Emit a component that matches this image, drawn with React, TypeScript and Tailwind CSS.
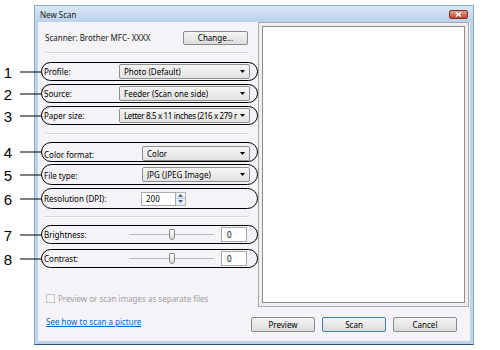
import React from "react";

function Arrow() {
  return (
    <svg width="5" height="3" viewBox="0 0 5 3" className="shrink-0">
      <path d="M0 0H5L2.5 3Z" fill="#000" />
    </svg>
  );
}

function Dropdown({ text, w, tight }: { text: string; w: string; tight?: boolean }) {
  return (
    <div
      className={`${w} h-[15px] shrink-0 flex items-center justify-between border border-[#8e8f8f] rounded-[2px] bg-linear-to-b from-[#f6f6f6] to-[#e2e2e2] pl-[4px] pr-[4px] gap-[3px]`}
    >
      <span
        className={`whitespace-nowrap overflow-hidden leading-[13px] text-black ${
          tight ? "tracking-[-0.35px]" : ""
        }`}
      >
        {text}
      </span>
      <Arrow />
    </div>
  );
}

function Marker({ n }: { n: string }) {
  return (
    <div className="absolute right-full top-1/2 -translate-y-1/2 flex items-center">
      <span className="w-[12px] text-center font-['Liberation_Sans'] text-[15px] leading-none text-black">
        {n}
      </span>
      <div className="ml-[6px] w-[22px] h-px bg-black" />
    </div>
  );
}

function Oval({
  n,
  cls,
  children,
}: {
  n: string;
  cls: string;
  children: React.ReactNode;
}) {
  return (
    <div
      className={`relative ml-[3px] w-[217px] shrink-0 rounded-full border-[1.5px] border-black flex items-center pl-[2px] pr-[7px] ${cls}`}
    >
      <Marker n={n} />
      {children}
    </div>
  );
}

function Separator({ cls }: { cls: string }) {
  return (
    <div className={`ml-[7px] w-[203px] shrink-0 ${cls}`}>
      <div className="h-px bg-[#d5d5d5]" />
      <div className="h-px bg-white" />
    </div>
  );
}

function Slider() {
  return (
    <div className="relative w-[85px] h-[12px] flex items-center">
      <div className="w-full h-px bg-[#b9b9b9]" />
      <div className="absolute left-[40px] top-0 w-[6px] h-[11px] border border-[#8a8a8a] rounded-b-[3px] rounded-t-[1px] bg-linear-to-b from-[#fafafa] to-[#dcdcdc]" />
    </div>
  );
}

function ValueBox() {
  return (
    <div className="ml-[7px] w-[26px] h-[15px] border border-[#a9a9a9] bg-white flex items-center pl-[5px] text-black">
      0
    </div>
  );
}

function Button({ label, def }: { label: string; def?: boolean }) {
  return (
    <div
      className={`h-[15px] w-[64px] flex items-center justify-center rounded-[2px] border bg-linear-to-b from-[#f5f5f5] to-[#dcdcdc] text-black ${
        def ? "border-[#3c7fb1]" : "border-[#8a8a8a]"
      }`}
    >
      {label}
    </div>
  );
}

export default function App() {
  return (
    <div className="w-[500px] h-[350px] bg-white overflow-hidden font-['Noto_Sans'] text-[8px] leading-none">
      <div className="ml-[34px] mt-[5px] w-[440px] h-[340px] flex flex-col border border-[#8ea8c6] border-b-[#2f527c] bg-[#bcd3ec]">
        {/* title bar */}
        <div className="h-[16px] shrink-0 flex items-center justify-between pl-[5px] pr-[5px] pt-[1px] bg-linear-to-b from-[#d9e7f6] to-[#bad2eb]">
          <span className="text-[#1a1a1a] text-[8px]">New Scan</span>
          <div className="w-[19px] h-[9px] rounded-[2px] border border-[#7c3428] bg-linear-to-b from-[#e6a08f] to-[#c0432d] flex items-center justify-center">
            <svg width="7" height="5" viewBox="0 0 7 5">
              <path d="M1 0.5L6 4.5M6 0.5L1 4.5" stroke="#fff" strokeWidth="1.4" />
            </svg>
          </div>
        </div>
        {/* content */}
        <div className="flex-1 mx-[3px] mb-[3px] bg-[#f5f3f7] flex">
          {/* left panel */}
          <div className="w-[220px] shrink-0 flex flex-col">
            <div className="mt-[9px] ml-[7px] w-[203px] h-[14px] flex items-center justify-between">
              <span className="text-[#1a1a1a]">Scanner: Brother MFC- XXXX</span>
              <div className="w-[65px] h-[14px] flex items-center justify-center rounded-[2px] border border-[#8a8a8a] bg-linear-to-b from-[#f5f5f5] to-[#dcdcdc] text-black">
                Change...
              </div>
            </div>
            <Separator cls="mt-[7px]" />
            <Oval n="1" cls="mt-[8px] h-[19px]">
              <span className="flex-1">Profile:</span>
              <Dropdown text="Photo (Default)" w="w-[131px]" />
            </Oval>
            <Oval n="2" cls="mt-[3px] h-[19px]">
              <span className="flex-1">Source:</span>
              <Dropdown text="Feeder (Scan one side)" w="w-[131px]" />
            </Oval>
            <Oval n="3" cls="mt-[3px] h-[19px]">
              <span className="flex-1">Paper size:</span>
              <Dropdown text="Letter 8.5 x 11 inches (216 x 279 mm)" w="w-[131px]" tight />
            </Oval>
            <Separator cls="mt-[8px]" />
            <Oval n="4" cls="mt-[7px] h-[20px]">
              <span className="flex-1 pt-[6px]">Color format:</span>
              <div className="pt-[3px]">
                <Dropdown text="Color" w="w-[108px]" />
              </div>
            </Oval>
            <Oval n="5" cls="mt-[2px] h-[21px]">
              <span className="flex-1 pt-[2px]">File type:</span>
              <Dropdown text="JPG (JPEG Image)" w="w-[108px]" />
            </Oval>
            <Oval n="6" cls="mt-[3px] h-[21px]">
              <span className="w-[97px]">Resolution (DPI):</span>
              <div className="w-[35px] h-[14px] border border-[#a9a9a9] bg-white flex items-center pl-[4px] text-black">
                200
              </div>
              <div className="w-[10px] h-[14px] flex flex-col border border-[#b5b5b5] border-l-0">
                <div className="flex-1 flex items-center justify-center bg-linear-to-b from-[#f2f7fc] to-[#dfe9f4] border-b border-[#c9c9c9]">
                  <svg width="5" height="3" viewBox="0 0 5 3">
                    <path d="M0 3H5L2.5 0Z" fill="#4d6185" />
                  </svg>
                </div>
                <div className="flex-1 flex items-center justify-center bg-linear-to-b from-[#f2f7fc] to-[#dfe9f4]">
                  <svg width="5" height="3" viewBox="0 0 5 3">
                    <path d="M0 0H5L2.5 3Z" fill="#4d6185" />
                  </svg>
                </div>
              </div>
            </Oval>
            <Separator cls="mt-[7px]" />
            <Oval n="7" cls="mt-[7px] h-[19px]">
              <span className="w-[85px]">Brightness:</span>
              <Slider />
              <ValueBox />
            </Oval>
            <Oval n="8" cls="mt-[5px] h-[19px]">
              <span className="w-[85px]">Contrast:</span>
              <Slider />
              <ValueBox />
            </Oval>
            <div className="mt-[26px] ml-[8px] flex items-center gap-[3px]">
              <div className="w-[9px] h-[9px] border border-[#c2c2c2] bg-[#f7f7f7]" />
              <span className="text-[#a0a0a0]">Preview or scan images as separate files</span>
            </div>
            <div className="mt-[15px] ml-[8px]">
              <span className="text-[#0b62c4] underline">See how to scan a picture</span>
            </div>
          </div>
          {/* right panel */}
          <div className="flex-1 flex flex-col">
            <div className="h-[285px] mr-[1px] border border-[#a9a9a9] bg-[#efefef] p-[3px]">
              <div className="w-full h-full border border-[#8e8e8e] bg-white" />
            </div>
            <div className="mt-[10px] -ml-[7px] flex gap-[7px]">
              <Button label="Preview" />
              <Button label="Scan" def />
              <Button label="Cancel" />
            </div>
          </div>
        </div>
      </div>
    </div>
  );
}
